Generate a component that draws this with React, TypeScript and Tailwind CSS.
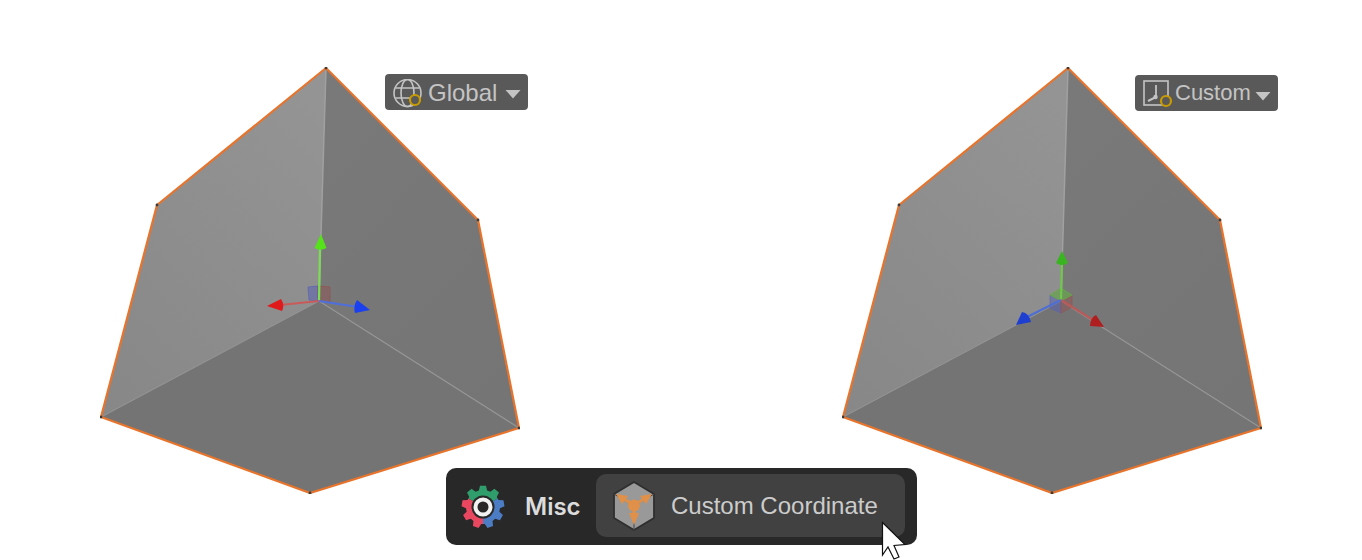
import { ReactNode } from "react";

type Pt = [number, number];

const TOP: Pt = [226, 1];
const UL: Pt = [57, 138];
const LEFT: Pt = [1, 350];
const BOTTOM: Pt = [210, 426];
const RIGHT: Pt = [419, 361];
const UR: Pt = [378, 153];
const CENTER: Pt = [219, 234];

function pts(list: Pt[]) {
  return list.map((p) => p.join(",")).join(" ");
}

// gear outline, nine teeth with one pointing straight up
function gearPoints() {
  const out: string[] = [];
  const teeth = 9;
  for (let i = 0; i < teeth; i++) {
    const a = -90 + (i * 360) / teeth;
    const corners: [number, number][] = [
      [-14, 17],
      [-8, 21.5],
      [8, 21.5],
      [14, 17],
    ];
    for (const [off, r] of corners) {
      const rad = ((a + off) * Math.PI) / 180;
      out.push(`${(r * Math.cos(rad)).toFixed(2)},${(r * Math.sin(rad)).toFixed(2)}`);
    }
  }
  return out.join(" ");
}

function Cube({ id, children }: { id: string; children: ReactNode }) {
  return (
    <svg width="420" height="427" viewBox="0 0 420 427" className="block">
      <defs>
        <linearGradient id={`${id}-l`} x1="0.8" y1="0" x2="0.2" y2="1">
          <stop offset="0" stopColor="#949495" />
          <stop offset="1" stopColor="#888889" />
        </linearGradient>
        <linearGradient id={`${id}-r`} x1="0.2" y1="0" x2="0.8" y2="1">
          <stop offset="0" stopColor="#797979" />
          <stop offset="1" stopColor="#757575" />
        </linearGradient>
      </defs>
      <polygon points={pts([TOP, UL, LEFT, CENTER])} fill={`url(#${id}-l)`} />
      <polygon points={pts([TOP, UR, RIGHT, CENTER])} fill={`url(#${id}-r)`} />
      <polygon points={pts([LEFT, CENTER, RIGHT, BOTTOM])} fill="#747474" />
      <line x1={TOP[0]} y1={TOP[1]} x2={CENTER[0]} y2={CENTER[1]} stroke="#a0a0a0" strokeWidth="1.5" />
      <line x1={CENTER[0]} y1={CENTER[1]} x2={RIGHT[0]} y2={RIGHT[1]} stroke="#949494" strokeWidth="1.2" />
      <line x1={CENTER[0]} y1={CENTER[1]} x2={LEFT[0]} y2={LEFT[1]} stroke="#909090" strokeWidth="1.2" />
      <polygon
        points={pts([TOP, UR, RIGHT, BOTTOM, LEFT, UL])}
        fill="none"
        stroke="#e8742c"
        strokeWidth="2.2"
        strokeLinejoin="round"
      />
      {[TOP, UR, RIGHT, BOTTOM, LEFT, UL].map((p, i) => (
        <circle key={i} cx={p[0]} cy={p[1]} r="1.4" fill="#3f3a36" />
      ))}
      {children}
    </svg>
  );
}

function GlobalGizmo() {
  return (
    <g className="blur-[0.5px]">
      <polygon points="208,220 218,219 218,234 209,233" fill="#5a62b0" fillOpacity="0.55" stroke="#5a62b8" strokeOpacity="0.7" />
      <polygon points="218,219 230,220 230,235 218,234" fill="#8d5a5a" fillOpacity="0.6" stroke="#96504f" strokeOpacity="0.7" />
      <line x1="219" y1="234" x2="220" y2="178" stroke="#7cdc55" strokeWidth="2.2" />
      <path d="M221 167L226.500 181Q220.500 184.500 214.500 181Z" fill="#55e21a" />
      <line x1="219" y1="234" x2="180" y2="238" stroke="#c95a5a" strokeWidth="2.2" />
      <path d="M167 239L181 232Q185 238 182 244Z" fill="#e01a1a" />
      <line x1="219" y1="234" x2="258" y2="240" stroke="#4f6fdc" strokeWidth="2.2" />
      <path d="M270 243L257 233Q253 239 255 246Z" fill="#1a40f0" />
    </g>
  );
}

function CustomGizmo() {
  return (
    <g className="blur-[0.5px]">
      <polygon points="208,228 219,234 219,246 208,241" fill="#5a62b0" fillOpacity="0.55" stroke="#5a62b8" strokeOpacity="0.6" />
      <polygon points="219,234 230,228 230,240 219,246" fill="#8d5a5a" fillOpacity="0.6" stroke="#96504f" strokeOpacity="0.6" />
      <polygon points="219,221 230,228 219,234 208,228" fill="#6aa050" fillOpacity="0.75" stroke="#62b040" strokeOpacity="0.7" />
      <line x1="219" y1="233" x2="220" y2="195" stroke="#6fc84a" strokeWidth="2.2" />
      <path d="M220 184L226 196Q220 200 214 196Z" fill="#39b51f" />
      <line x1="219" y1="233" x2="251" y2="253" stroke="#b85a5a" strokeWidth="2.2" />
      <path d="M262 260L248 259Q248 251 254 248Z" fill="#b01f1f" />
      <line x1="219" y1="233" x2="185" y2="250" stroke="#4f6fd0" strokeWidth="2.2" />
      <path d="M174 258L180 245Q187 246 189 255Z" fill="#1f3fd0" />
    </g>
  );
}

function GlobeIcon() {
  return (
    <svg width="32" height="32" viewBox="0 0 32 32" fill="none" className="mt-[3px] ml-[2px] shrink-0">
      <g stroke="#c4c4c4" strokeWidth="1.600">
        <circle cx="14.500" cy="14" r="13.500" />
        <ellipse cx="14.500" cy="14" rx="6.500" ry="13.500" />
        <path d="M2.500 9h24M2.500 19h24" />
      </g>
      <circle cx="22" cy="21" r="5" fill="#595959" stroke="#c89a00" strokeWidth="2.200" />
    </svg>
  );
}

function AxisIcon() {
  return (
    <svg width="32" height="32" viewBox="0 0 32 32" fill="none" className="mt-[3px] shrink-0">
      <rect x="2" y="3" width="24" height="24" stroke="#c4c4c4" strokeWidth="1.600" />
      <path d="M14 7v12" stroke="#c4c4c4" strokeWidth="1.800" />
      <path d="M14 19l-8 4" stroke="#c4c4c4" strokeWidth="2" />
      <circle cx="13.500" cy="19" r="2.200" fill="#c4c4c4" />
      <circle cx="24" cy="23" r="5" fill="#595959" stroke="#c89a00" strokeWidth="2.200" />
    </svg>
  );
}

function GearIcon() {
  return (
    <svg width="44" height="44" viewBox="-22 -22 44 44" className="shrink-0">
      <defs>
        <clipPath id="gear-shape">
          <polygon points={gearPoints()} />
        </clipPath>
      </defs>
      <g clipPath="url(#gear-shape)">
        <polygon points="0,0 -40,-23 -40,-40 40,-40 40,-23" fill="#2f9e6c" />
        <polygon points="0,0 -40,-23 -40,40 0,40" fill="#e8475f" />
        <polygon points="0,0 40,-23 40,40 0,40" fill="#4c7cc4" />
      </g>
      <circle r="11.500" fill="#282828" />
      <circle r="7.500" fill="none" stroke="#f2f2f2" strokeWidth="4" />
    </svg>
  );
}

function CoordIcon() {
  return (
    <svg width="42" height="50" viewBox="0 0 42 50" className="shrink-0">
      <polygon points="21,1 41,13 41,37 21,49 1,37 1,13" fill="#999999" stroke="#2f2f2f" strokeWidth="1.800" strokeLinejoin="round" />
      <path d="M21 25L1 13M21 25L41 13M21 25V49" stroke="#444444" strokeWidth="1" />
      <g fill="#e09048">
        <path d="M21 24L9 17M21 24L33 17M21 24V36" stroke="#e09048" strokeWidth="3" />
        <polygon points="3,13 15,15 9,23" />
        <polygon points="39,13 27,15 33,23" />
        <polygon points="21,44 16,32 26,32" />
        <circle cx="21" cy="24.500" r="6" />
      </g>
    </svg>
  );
}

function Pill({ icon, label, className }: { icon: ReactNode; label: string; className: string }) {
  return (
    <div className={`absolute flex h-9 w-[143px] items-center rounded bg-[#595959] text-[#c4c4c4] ${className}`}>
      {icon}
      {label}
    </div>
  );
}

export default function App() {
  return (
    <div className="h-[560px] w-[1362px] overflow-hidden bg-white font-['Liberation_Sans',Arial,sans-serif]">
      <div className="flex h-[468px] gap-[322px] pl-[100px] pt-[67px]">
        <div className="relative h-[427px] w-[420px]">
          <Cube id="a">
            <GlobalGizmo />
          </Cube>
          <Pill
            className="left-[285px] top-[7px] gap-[3px] pl-[6px] pt-[2px] text-2xl leading-none"
            icon={<GlobeIcon />}
            label="Global"
          />
          <svg width="16" height="9" viewBox="0 0 16 9" className="absolute left-[405px] top-[23px]">
            <polygon points="0.500,0 15.500,0 8,8.500" fill="#c4c4c4" />
          </svg>
        </div>
        <div className="relative h-[427px] w-[420px]">
          <Cube id="b">
            <CustomGizmo />
          </Cube>
          <Pill
            className="left-[293px] top-[8px] gap-px pl-[7px] pb-[1px] text-[22px] leading-none"
            icon={<AxisIcon />}
            label="Custom"
          />
          <svg width="16" height="9" viewBox="0 0 16 9" className="absolute left-[413px] top-[25px]">
            <polygon points="0.500,0 15.500,0 8,8.500" fill="#c4c4c4" />
          </svg>
        </div>
      </div>
      <div className="relative ml-[446px] flex h-[77px] w-[471px] items-center rounded-[10px] bg-[#282828] pl-[15px]">
        <GearIcon />
        <span className="ml-[20px] w-[71px] font-['Inter',sans-serif] text-2xl font-semibold text-[#dcdcdc]">Misc</span>
        <div className="mb-[2px] flex h-[63px] w-[309px] items-center rounded-[10px] bg-[#414141] pl-[17px] text-2xl text-[#cccccc]">
          <CoordIcon />
          <span className="ml-[16px]">Custom Coordinate</span>
        </div>
        <svg width="26" height="40" viewBox="0 0 26 40" className="absolute left-[435px] top-[53px]">
          <polygon
            points="1.500,1.500 1.500,34 7,26 13,38 18,36 13,24.500 24,23.500"
            fill="#ffffff"
            stroke="#111111"
            strokeWidth="1.200"
            strokeLinejoin="miter"
          />
        </svg>
      </div>
    </div>
  );
}
